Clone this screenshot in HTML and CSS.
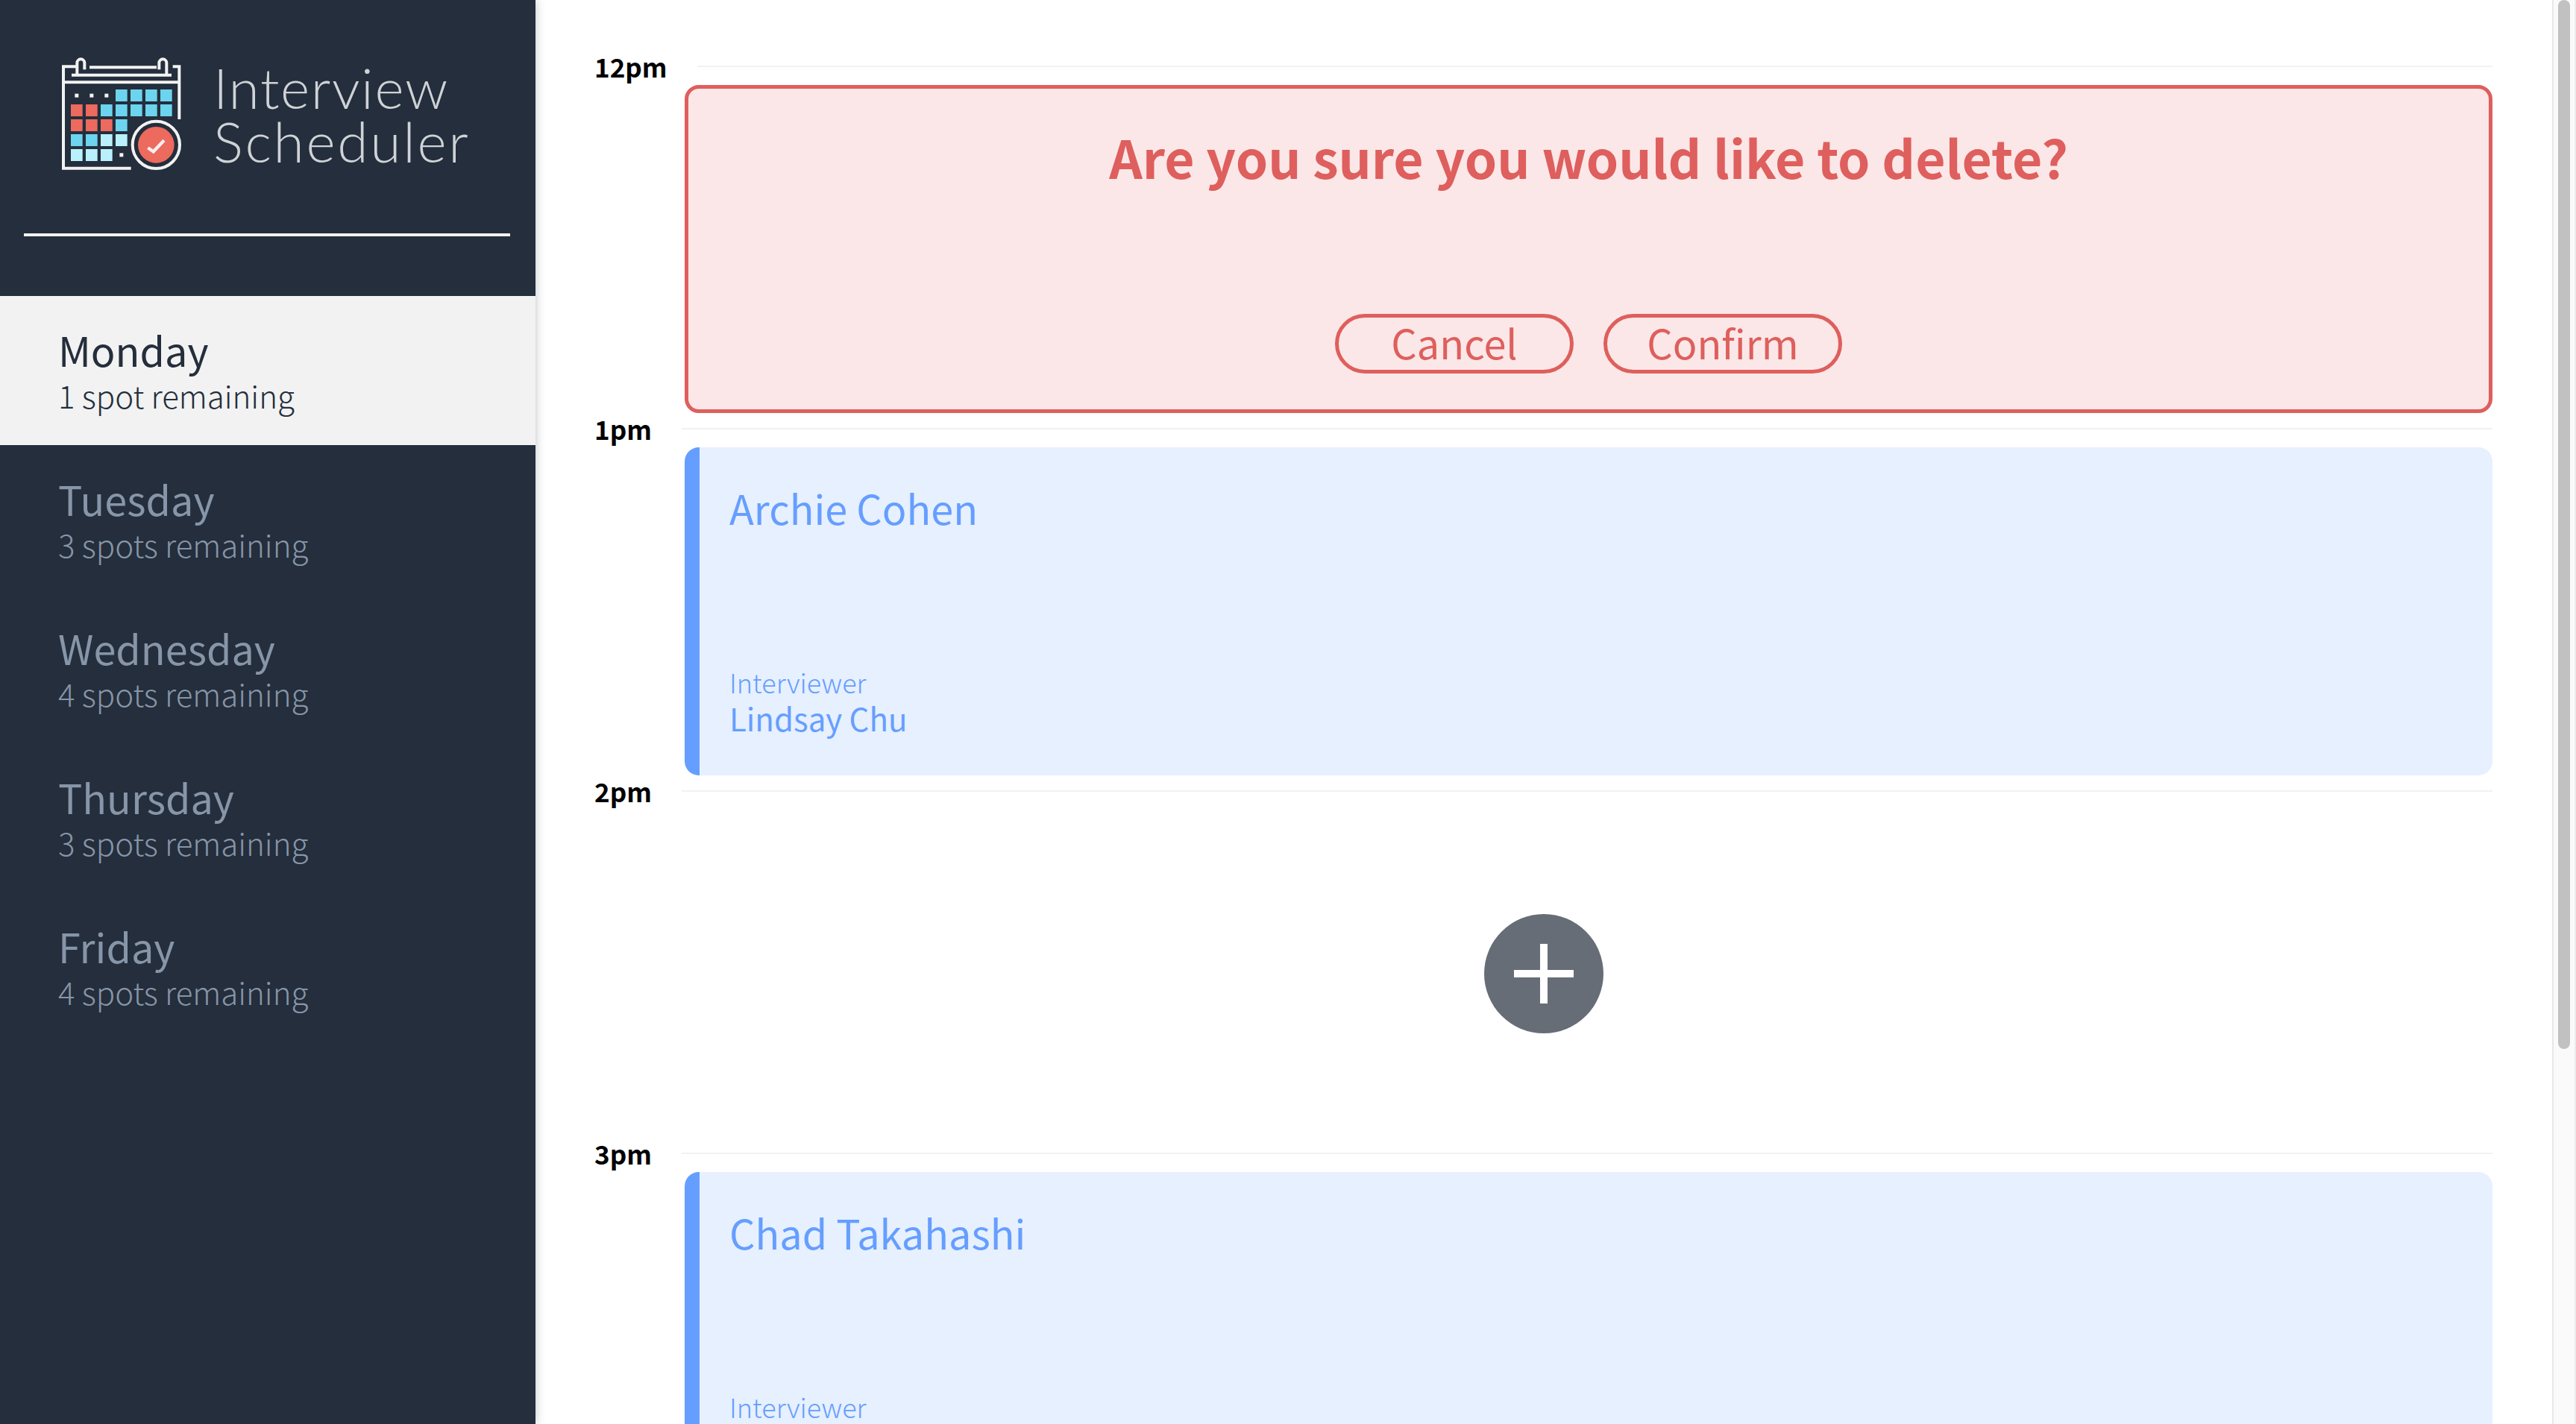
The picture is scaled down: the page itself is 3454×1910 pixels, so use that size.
FILE: index.html
```html
<!DOCTYPE html>
<html lang="en">
<head>
<meta charset="utf-8">
<title>Interview Scheduler</title>
<link rel="stylesheet" href="styles.css">
</head>
<body>
<div class="layout">
  <aside class="sidebar">
    <div class="brand">
      <svg class="brand-icon" viewBox="0 0 600 570" width="200" height="190" aria-hidden="true">
        <g fill="none" stroke="#f2f2f2" stroke-width="12">
          <path d="M347 497H75V88H130"/>
          <path d="M75 151H541"/>
          <path d="M515 88H541V300"/>
          <path d="M180 91H450"/>
          <path d="M108 122H510"/>
          <path d="M130 122V73a15 15 0 0 1 30 0V100"/>
          <path d="M460 100V73a15 15 0 0 1 30 0V122"/>
        </g>
        <g fill="#f2f2f2">
          <rect x="121" y="197" width="15" height="15"/>
          <rect x="181" y="197" width="15" height="15"/>
          <rect x="241" y="197" width="15" height="15"/>
          <rect x="301" y="436" width="15" height="15"/>
        </g>
        <g fill="#6cd4ef">
          <rect x="285" y="180" width="47" height="48"/><rect x="345" y="180" width="47" height="48"/><rect x="405" y="180" width="47" height="48"/><rect x="465" y="180" width="47" height="48"/>
          <rect x="225" y="240" width="47" height="48"/><rect x="285" y="240" width="47" height="48"/><rect x="345" y="240" width="47" height="48"/><rect x="405" y="240" width="47" height="48"/><rect x="465" y="240" width="47" height="48"/>
          <rect x="285" y="300" width="47" height="48"/>
          <rect x="105" y="360" width="47" height="48"/><rect x="165" y="360" width="47" height="48"/>
        </g>
        <g fill="#ed6a5e">
          <rect x="105" y="240" width="47" height="48"/><rect x="165" y="240" width="47" height="48"/>
          <rect x="105" y="300" width="47" height="48"/><rect x="165" y="300" width="47" height="48"/><rect x="225" y="300" width="47" height="48"/>
        </g>
        <g fill="#b9f0fb">
          <rect x="225" y="360" width="47" height="48"/><rect x="285" y="360" width="47" height="48"/>
          <rect x="105" y="420" width="47" height="48"/><rect x="165" y="420" width="47" height="48"/><rect x="225" y="420" width="47" height="48"/>
        </g>
        <circle cx="448" cy="403" r="95" fill="#242e3c" stroke="#f2f2f2" stroke-width="12"/>
        <circle cx="448" cy="403" r="73" fill="#ed6a5e"/>
        <path d="M415 415L437 430L480 385" fill="none" stroke="#f7f0ee" stroke-width="13"/>
      </svg>
      <div class="brand-name"><span class="brand-line">Interview</span><span class="brand-line brand-line-wide">Scheduler</span></div>
    </div>
    <hr class="divider">
    <nav class="days">
      <div class="day day-selected"><h2 class="day-name">Monday</h2><p class="day-spots">1 spot remaining</p></div>
      <div class="day"><h2 class="day-name">Tuesday</h2><p class="day-spots">3 spots remaining</p></div>
      <div class="day"><h2 class="day-name">Wednesday</h2><p class="day-spots">4 spots remaining</p></div>
      <div class="day"><h2 class="day-name">Thursday</h2><p class="day-spots">3 spots remaining</p></div>
      <div class="day"><h2 class="day-name">Friday</h2><p class="day-spots">4 spots remaining</p></div>
    </nav>
  </aside>
  <main class="schedule">
    <section class="slot">
      <header class="slot-head"><h4 class="slot-time">12pm</h4><hr class="slot-line"></header>
      <div class="slot-body card-danger">
        <h1 class="confirm-title">Are you sure you would like to delete?</h1>
        <div class="confirm-actions">
          <button class="btn">Cancel</button>
          <button class="btn">Confirm</button>
        </div>
      </div>
    </section>
    <section class="slot">
      <header class="slot-head"><h4 class="slot-time">1pm</h4><hr class="slot-line"></header>
      <div class="slot-body card-show">
        <h2 class="student">Archie Cohen</h2>
        <div><h4 class="interviewer-label">Interviewer</h4><h3 class="interviewer-name">Lindsay Chu</h3></div>
      </div>
    </section>
    <section class="slot">
      <header class="slot-head"><h4 class="slot-time">2pm</h4><hr class="slot-line"></header>
      <div class="slot-body card-empty">
        <svg class="add" viewBox="0 0 160 160" width="160" height="160" aria-hidden="true">
          <circle cx="80" cy="80" r="80" fill="#666d76"/>
          <path d="M40 80H120M80 40V120" stroke="#fff" stroke-width="10" fill="none"/>
        </svg>
      </div>
    </section>
    <section class="slot">
      <header class="slot-head"><h4 class="slot-time">3pm</h4><hr class="slot-line"></header>
      <div class="slot-body card-show">
        <h2 class="student">Chad Takahashi</h2>
        <div><h4 class="interviewer-label">Interviewer</h4><div class="interviewer-name"></div></div>
      </div>
    </section>
  </main>
  <div class="scrollbar"><div class="scrollbar-thumb"></div></div>
</div>
</body>
</html>
```

FILE: styles.css
```css
* { box-sizing: border-box; }
html, body { margin: 0; height: 100%; overflow: hidden; background: #fff; }
body { font-family: "Noto Sans CJK SC", "Source Sans Pro", sans-serif; }
h1, h2, h3, h4, p, hr { margin: 0; padding: 0; font-weight: 400; }
hr { border: 0; }

.layout { display: flex; width: 3454px; height: 1910px; overflow: hidden; }

.sidebar { flex: 0 0 718px; position: relative; z-index: 1; background: #242e3c; box-shadow: 0 0 12px rgba(36, 46, 60, .3); }
.brand { display: flex; align-items: flex-start; height: 313px; padding: 60px 0 0 60px; }
.brand-icon { flex: none; display: block; }
.brand-name {
  margin: 21px 0 0 26px;
  font-family: "Lato", sans-serif;
  font-weight: 300;
  font-size: 75px;
  line-height: 72px;
  letter-spacing: 1.6px;
  color: #cfd2d6;
  white-space: nowrap;
}
.brand-line { display: block; }
.brand-line-wide { letter-spacing: 2.7px; }
.divider { height: 4px; margin: 0 34px 0 32px; background: #f2f2f2; }
.days { margin-top: 80px; }
.day { height: 200px; padding: 40px 0 0 78px; color: #8795a8; }
.day-selected { background: #f2f2f2; color: #242e3c; }
.day-name { font-size: 54px; line-height: 64px; }
.day-spots { font-size: 42px; line-height: 58px; font-weight: 300; }

.schedule { flex: 1; min-width: 0; padding: 88px 80px 0 79px; overflow: hidden; }
.slot { height: 486px; }
.slot-head { display: flex; align-items: flex-start; height: 26px; }
.slot-time {
  margin-top: -21px;
  margin-right: 40px;
  font-size: 35px;
  line-height: 44px;
  font-weight: 700;
  color: #000;
  white-space: nowrap;
}
.slot-line { flex: 1; height: 2px; background: #f2f2f2; }
.slot-body { height: 440px; margin-left: 121px; border-radius: 19px; }

.card-danger {
  display: flex;
  flex-direction: column;
  align-items: center;
  justify-content: space-between;
  padding: 41px 0 48px;
  background: #fbe7e7;
  border: 5px solid #de5f5d;
  color: #de5f5d;
}
.confirm-title { font-size: 69.5px; line-height: 100px; font-weight: 600; }
.confirm-actions { display: flex; gap: 40px; }
.btn {
  width: 320px;
  height: 80px;
  padding: 0 0 5px;
  border: 5px solid #de5f5d;
  border-radius: 40px;
  background: transparent;
  color: #de5f5d;
  font-family: inherit;
  font-size: 54px;
  line-height: 65px;
}

.card-show {
  display: flex;
  flex-direction: column;
  justify-content: space-between;
  padding: 45px 40px 51px;
  background: #e6f0fe;
  border-left: 20px solid #669eff;
  color: #669eff;
}
.student { font-size: 54px; line-height: 72px; }
.interviewer-label { font-size: 36px; line-height: 46px; font-weight: 300; }
.interviewer-name { font-size: 42px; line-height: 52px; min-height: 52px; }

.card-empty { display: flex; align-items: center; justify-content: center; padding-right: 120px; }
.add { display: block; }

.scrollbar {
  flex: 0 0 30px;
  padding: 0 6px;
  background: #fafafa;
  border-left: 2px solid #e8e8e8;
  border-right: 2px solid #ececec;
}
.scrollbar-thumb { width: 16px; height: 1407px; background: #c1c1c1; border-radius: 8px; }
```
